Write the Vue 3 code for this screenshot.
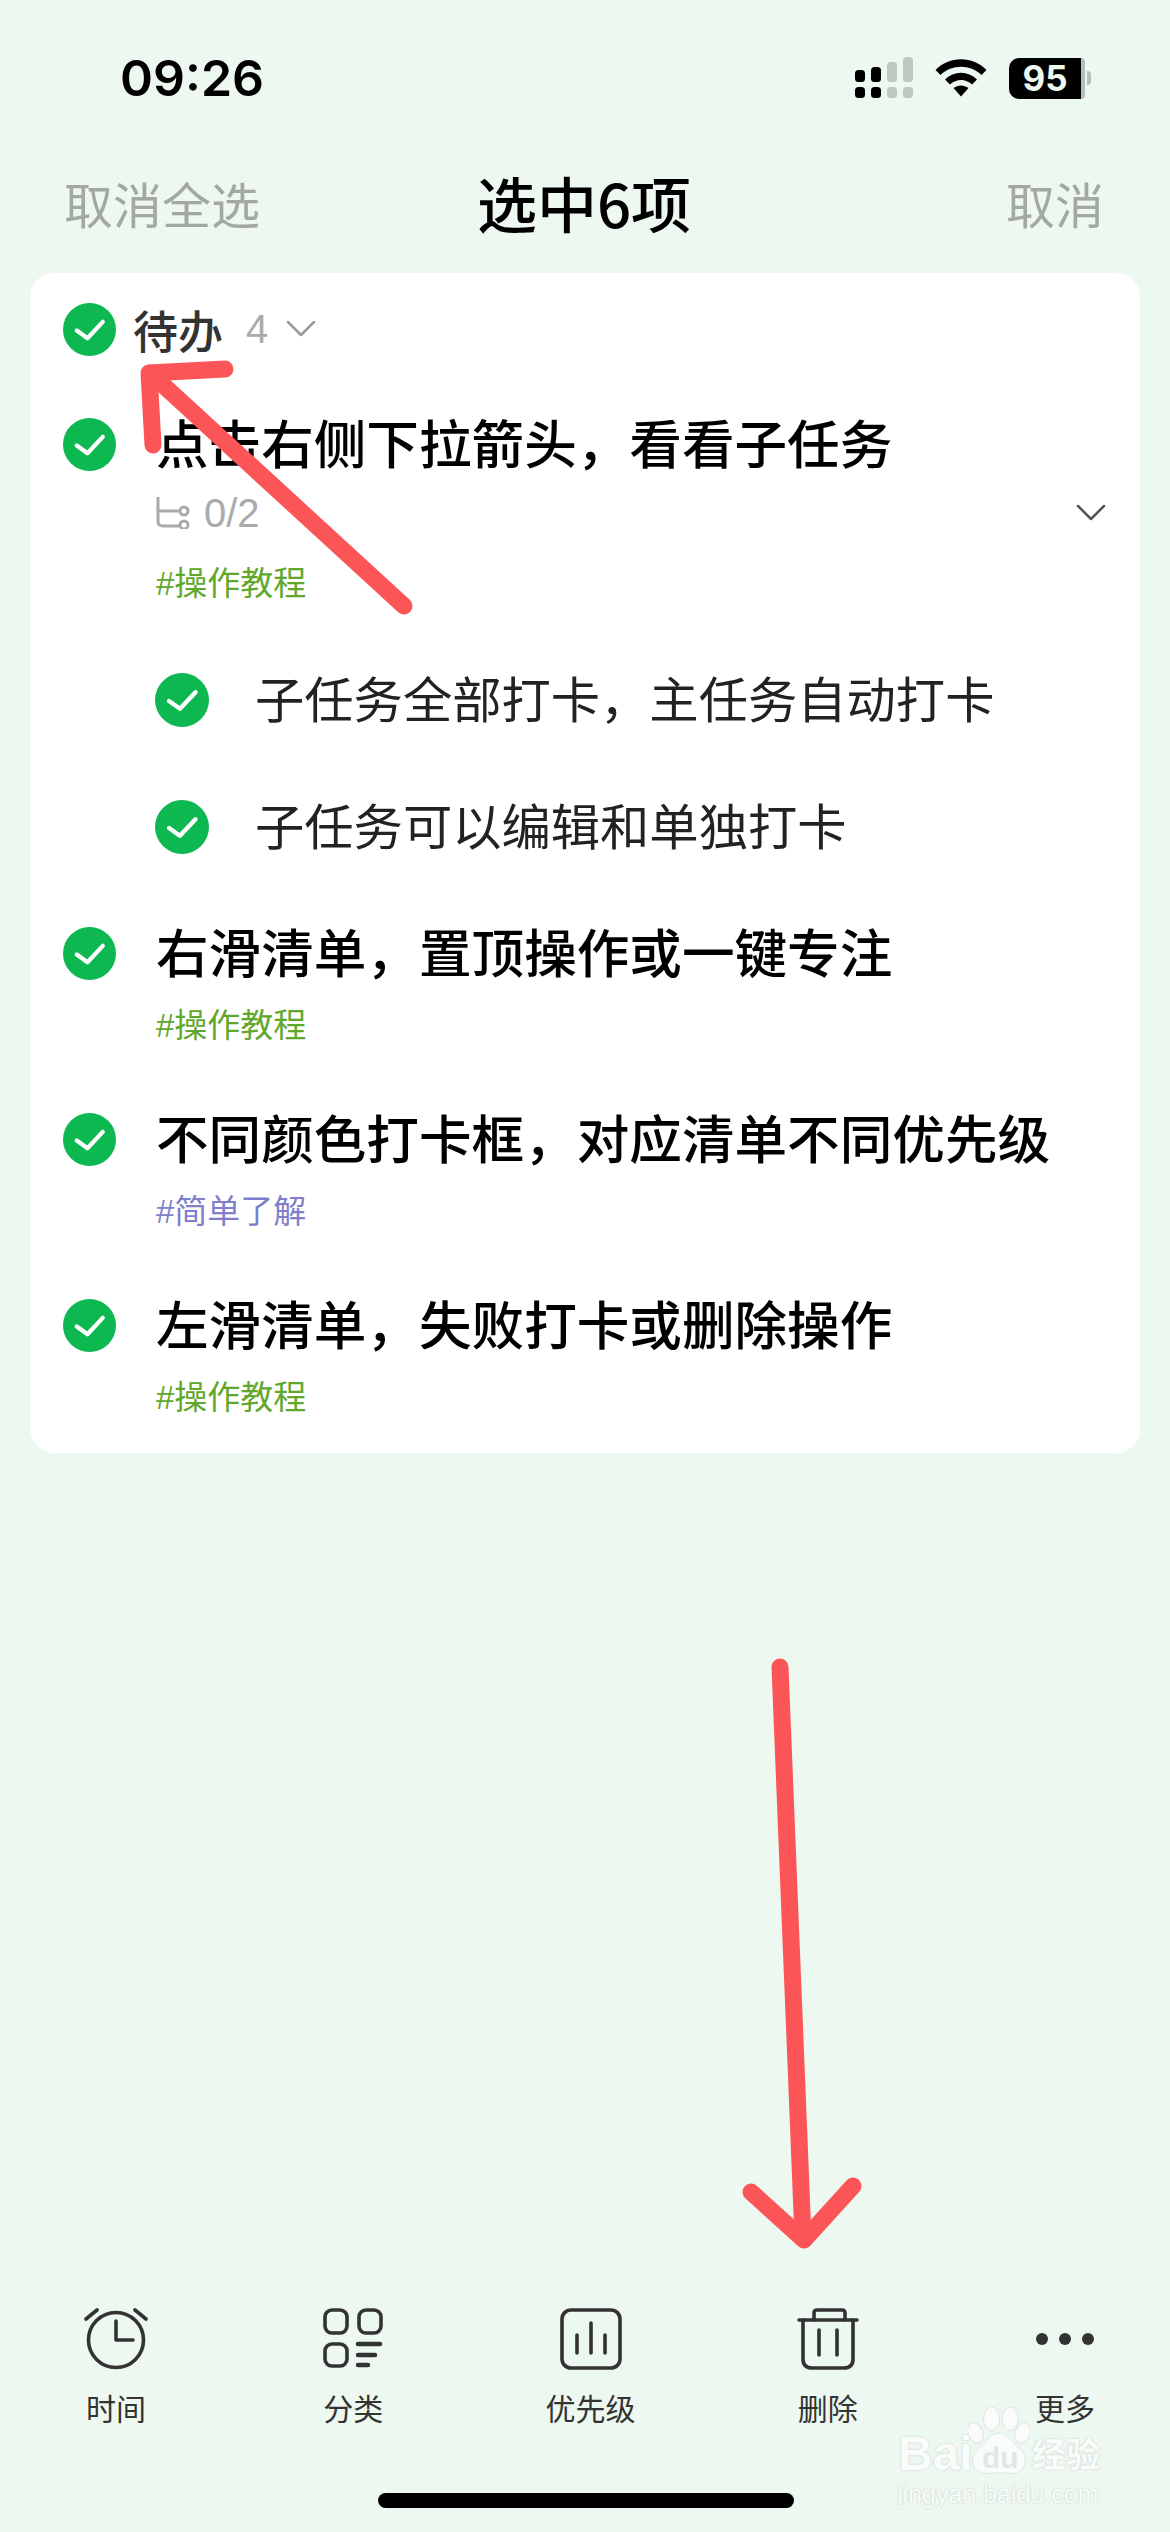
<template>
  <div class="screen">
    <div class="status-bar">
      <span class="time">09:26</span>
      <div class="status-icons">
        <svg class="signal" width="58" height="42" viewBox="0 0 58 42">
          <rect x="0" y="13" width="10" height="12" rx="3.5" fill="#000" />
          <rect x="16" y="10" width="10" height="15" rx="3.5" fill="#000" />
          <rect x="32" y="5" width="10" height="20" rx="3.5" fill="#bcc8c0" />
          <rect x="48" y="0" width="10" height="25" rx="3.5" fill="#bcc8c0" />
          <rect x="0" y="30" width="10" height="11" rx="3.5" fill="#000" />
          <rect x="16" y="30" width="10" height="11" rx="3.5" fill="#000" />
          <rect x="32" y="30" width="10" height="11" rx="3.5" fill="#bcc8c0" />
          <rect x="48" y="30" width="10" height="11" rx="3.5" fill="#bcc8c0" />
        </svg>
        <svg class="wifi" width="52" height="38" viewBox="0 0 52 38">
          <path d="M0.5 11 C14 -3.5 38 -3.5 51.5 11 L46.5 16 C35.5 5 16.5 5 5.500 16 Z" fill="#000" />
          <path d="M10 20.500 C19 11.500 33 11.500 42 20.500 L37 25.500 C30.500 19.500 21.500 19.500 15 25.500 Z" fill="#000" />
          <path d="M18.500 29 C23 25.500 29 25.500 33.500 29 L26 37.500 Z" fill="#000" />
        </svg>
        <div class="battery">
          <span class="battery-level">95</span>
          <span class="battery-rest"></span>
          <span class="battery-nub"></span>
        </div>
      </div>
    </div>

    <div class="nav-bar">
      <span class="nav-btn">取消全选</span>
      <span class="nav-title">选中6项</span>
      <span class="nav-btn">取消</span>
    </div>

    <div class="card">
      <div class="group-row">
        <svg class="check" width="53" height="53" viewBox="0 0 52 52">
          <circle cx="26" cy="26" r="26" fill="#0cb84f" />
          <path d="M13.500 27 L24 34.500 L39 18.500" fill="none" stroke="#fff" stroke-width="4.200" stroke-linecap="round" stroke-linejoin="round" />
        </svg>
        <span class="group-name">待办</span>
        <span class="group-count">4</span>
        <svg width="30" height="18" viewBox="0 0 30 18">
          <path d="M2 2 L15 15 L28 2" fill="none" stroke="#999" stroke-width="2.500" stroke-linecap="round" stroke-linejoin="round" />
        </svg>
      </div>

      <div v-for="task in tasks" :key="task.title" class="task">
        <div class="task-main">
          <svg class="check" width="53" height="53" viewBox="0 0 52 52">
            <circle cx="26" cy="26" r="26" fill="#0cb84f" />
            <path d="M13.500 27 L24 34.500 L39 18.500" fill="none" stroke="#fff" stroke-width="4.200" stroke-linecap="round" stroke-linejoin="round" />
          </svg>
          <span class="task-title">{{ task.title }}</span>
        </div>
        <div v-if="task.subs" class="task-meta">
          <svg width="34" height="32" viewBox="0 0 34 32">
            <path d="M2 0 V24 Q2 29 7 29 H23 M2 14 H23" fill="none" stroke="#aaa" stroke-width="3" />
            <circle cx="28" cy="14" r="4" fill="none" stroke="#aaa" stroke-width="3" />
            <circle cx="28" cy="28" r="4" fill="none" stroke="#aaa" stroke-width="3" />
          </svg>
          <span class="task-progress">0/2</span>
          <svg class="task-toggle" width="30" height="18" viewBox="0 0 30 18">
            <path d="M2 2 L15 15 L28 2" fill="none" stroke="#555" stroke-width="2.500" stroke-linecap="round" stroke-linejoin="round" />
          </svg>
        </div>
        <div class="task-tag" :class="{ 'has-meta': task.subs }" :style="{ color: task.tagColor }">{{ task.tag }}</div>
        <div v-if="task.subs" class="subtasks">
          <div v-for="sub in task.subs" :key="sub" class="subtask">
            <svg class="check" width="54" height="54" viewBox="0 0 52 52">
              <circle cx="26" cy="26" r="26" fill="#0cb84f" />
              <path d="M13.500 27 L24 34.500 L39 18.500" fill="none" stroke="#fff" stroke-width="4.200" stroke-linecap="round" stroke-linejoin="round" />
            </svg>
            <span class="subtask-title">{{ sub }}</span>
          </div>
        </div>
      </div>
    </div>

    <div class="toolbar">
      <div v-for="tool in tools" :key="tool.label" class="tool">
        <svg width="64" height="64" viewBox="0 0 64 64" fill="none" stroke="#333" stroke-width="3.600" stroke-linecap="round" stroke-linejoin="round">
          <template v-if="tool.icon === 'clock'">
            <circle cx="32" cy="33" r="27.500" />
            <path d="M32 14 V33 H49" />
            <path d="M2 12 L13 3 M62 12 L51 3" />
          </template>
          <template v-else-if="tool.icon === 'category'">
            <rect x="4" y="3" width="22" height="23" rx="7" />
            <rect x="38" y="3" width="22" height="23" rx="7" />
            <rect x="4" y="37" width="22" height="22" rx="7" />
            <path d="M37 37 H59 M37 48 H54 M37 58 H47" stroke-width="4.500" />
          </template>
          <template v-else-if="tool.icon === 'priority'">
            <rect x="3" y="3" width="58" height="58" rx="9" />
            <path d="M18 28 V46 M32 16 V46 M46 28 V46" />
          </template>
          <template v-else-if="tool.icon === 'trash'">
            <path d="M3 13 H61" />
            <path d="M18 13 V6 Q18 3 21 3 H46 Q49 3 49 6 V13" />
            <path d="M7 13 V52 Q7 61 16 61 H48 Q57 61 57 52 V13" />
            <path d="M23 23 V48 M41 23 V48" />
          </template>
          <template v-else>
            <circle cx="9" cy="32" r="6" fill="#333" stroke="none" />
            <circle cx="32" cy="32" r="6" fill="#333" stroke="none" />
            <circle cx="55" cy="32" r="6" fill="#333" stroke="none" />
          </template>
        </svg>
        <span class="tool-label">{{ tool.label }}</span>
      </div>
    </div>

    <div class="home-bar"></div>

    <div class="watermark">
      <svg class="paw" width="62" height="67" viewBox="0 0 100 108" fill="#f9fcfa" stroke="#d8e4dc" stroke-width="1.500">
        <ellipse cx="38" cy="19" rx="13" ry="19" />
        <ellipse cx="68" cy="19" rx="13" ry="19" />
        <ellipse cx="12" cy="42" rx="12" ry="17" transform="rotate(-20 12 42)" />
        <ellipse cx="88" cy="42" rx="12" ry="17" transform="rotate(20 88 42)" />
        <path d="M50 42 C64 42 72 58 86 70 C100 86 90 108 70 107 C58 106 42 106 30 107 C10 108 0 86 14 70 C28 58 36 42 50 42 Z" />
      </svg>
      <span class="wm-bai">Bai</span>
      <span class="wm-du">du</span>
      <span class="wm-cn">经验</span>
      <div class="wm-url">jingyan.baidu.com</div>
    </div>

    <svg class="arrows" width="1170" height="2532" viewBox="0 0 1170 2532" fill="none" stroke="#fc5558" stroke-width="17" stroke-linecap="round" stroke-linejoin="round">
      <path d="M404 606 L150 373" />
      <path d="M225 369 L149 373 L153 445" />
      <path d="M780 1667 L803 2238" />
      <path d="M751 2192 L804 2240 L853 2186" />
    </svg>
  </div>
</template>

<script setup>
const OPERATE = '#5fa82c'
const LEARN = '#7f7fcb'

const tasks = [
  {
    title: '点击右侧下拉箭头，看看子任务',
    tag: '#操作教程',
    tagColor: OPERATE,
    subs: ['子任务全部打卡，主任务自动打卡', '子任务可以编辑和单独打卡']
  },
  { title: '右滑清单，置顶操作或一键专注', tag: '#操作教程', tagColor: OPERATE },
  { title: '不同颜色打卡框，对应清单不同优先级', tag: '#简单了解', tagColor: LEARN },
  { title: '左滑清单，失败打卡或删除操作', tag: '#操作教程', tagColor: OPERATE }
]

const tools = [
  { label: '时间', icon: 'clock' },
  { label: '分类', icon: 'category' },
  { label: '优先级', icon: 'priority' },
  { label: '删除', icon: 'trash' },
  { label: '更多', icon: 'more' }
]
</script>

<style>
html,
body {
  margin: 0;
  background: #edf8f0;
}
</style>

<style scoped>
.screen {
  position: relative;
  width: 1170px;
  height: 2532px;
  overflow: hidden;
  display: flex;
  flex-direction: column;
  background: #edf8f0;
  font-family: "Liberation Sans", "Noto Sans CJK SC", sans-serif;
}

.status-bar {
  height: 156px;
  flex: none;
  display: flex;
  justify-content: space-between;
  align-items: center;
  padding: 0 79px 0 120px;
  box-sizing: border-box;
}

.time {
  font-family: Inter, sans-serif;
  font-size: 50px;
  font-weight: 600;
  color: #000;
}

.status-icons {
  display: flex;
  align-items: center;
  gap: 22px;
}

.battery {
  display: flex;
  align-items: center;
  width: 82px;
  height: 41px;
}

.battery-level {
  width: 72px;
  height: 41px;
  background: #000;
  border-radius: 10px 0 0 10px;
  color: #edf8f0;
  font-family: Inter, sans-serif;
  font-size: 35px;
  font-weight: 700;
  line-height: 41px;
  text-align: center;
}

.battery-rest {
  width: 4px;
  height: 41px;
  background: #b5c0b8;
  border-radius: 0 8px 8px 0;
}

.battery-nub {
  width: 4px;
  height: 14px;
  margin-left: 2px;
  background: #b5c0b8;
  border-radius: 0 7px 7px 0;
}

.nav-bar {
  height: 117px;
  flex: none;
  display: flex;
  justify-content: space-between;
  align-items: center;
  padding: 0 66px 25px 64px;
  box-sizing: border-box;
}

.nav-btn {
  width: 196px;
  font-size: 49px;
  color: #a3a8a4;
}

.nav-btn:last-child {
  text-align: right;
}

.nav-title {
  font-family: "Noto Sans CJK SC", sans-serif;
  font-size: 60px;
  font-weight: 500;
  line-height: 72px;
  color: #000;
}

.card {
  flex: none;
  margin: 0 30px;
  height: 1180px;
  padding: 30px 0 0 33px;
  box-sizing: border-box;
  background: #fff;
  border-radius: 24px;
}

.group-row {
  display: flex;
  align-items: center;
  height: 52px;
  margin-bottom: 63px;
}

.check {
  flex: none;
}

.group-name {
  margin-left: 17px;
  font-size: 45px;
  font-weight: 500;
  color: #333;
}

.group-count {
  margin-left: 23px;
  margin-right: 18px;
  font-size: 40px;
  color: #aaa;
}

.task {
  margin-bottom: 67px;
}

.task-main {
  display: flex;
  align-items: center;
  height: 52px;
}

.task-title {
  margin: 4px 0 0 40px;
  font-size: 52.600px;
  font-weight: 500;
  line-height: 52px;
  color: #000;
  white-space: nowrap;
}

.task-meta {
  position: relative;
  display: flex;
  align-items: center;
  height: 44px;
  margin: 21px 0 0 93px;
}

.task-progress {
  margin-left: 14px;
  font-size: 40px;
  color: #aaa;
}

.task-toggle {
  position: absolute;
  right: 34px;
  top: 13px;
}

.task-tag {
  margin: 27px 0 0 93px;
  font-size: 33px;
  line-height: 40px;
}

.task-tag.has-meta {
  margin-top: 29px;
}

.subtasks {
  margin-top: 69px;
}

.subtask {
  display: flex;
  align-items: center;
  height: 54px;
  margin: 0 0 73px 92px;
}

.subtask-title {
  margin: 0 0 8px 46px;
  font-size: 49.300px;
  color: #222;
  white-space: nowrap;
}

.toolbar {
  position: absolute;
  left: 0;
  right: 0;
  top: 2307px;
  display: flex;
  justify-content: space-between;
  padding: 0 45px 0 56px;
  box-sizing: border-box;
}

.tool {
  width: 120px;
  display: flex;
  flex-direction: column;
  align-items: center;
  gap: 19px;
}

.tool-label {
  font-size: 30px;
  line-height: 40px;
  color: #333;
}

.home-bar {
  position: absolute;
  left: 378px;
  bottom: 24px;
  width: 416px;
  height: 15px;
  background: #000;
  border-radius: 8px;
}

.watermark {
  position: absolute;
  left: 896px;
  top: 2405px;
  width: 215px;
  height: 105px;
  color: #f9fcfa;
  text-shadow: 0 0 2px #b9c9be;
}

.paw {
  position: absolute;
  left: 72px;
  top: 2px;
}

.wm-bai {
  position: absolute;
  left: 2px;
  top: 26px;
  font-size: 48px;
  font-weight: 700;
  line-height: 46px;
}

.wm-du {
  position: absolute;
  left: 86px;
  top: 37px;
  font-size: 30px;
  font-weight: 700;
  line-height: 32px;
  color: #dfe9e3;
  text-shadow: none;
}

.wm-cn {
  position: absolute;
  left: 136px;
  top: 30px;
  font-size: 34px;
  font-weight: 700;
  line-height: 40px;
  white-space: nowrap;
}

.wm-url {
  position: absolute;
  left: 1px;
  top: 76px;
  font-size: 25px;
  line-height: 26px;
  white-space: nowrap;
}

.arrows {
  position: absolute;
  left: 0;
  top: 0;
  pointer-events: none;
}
</style>
